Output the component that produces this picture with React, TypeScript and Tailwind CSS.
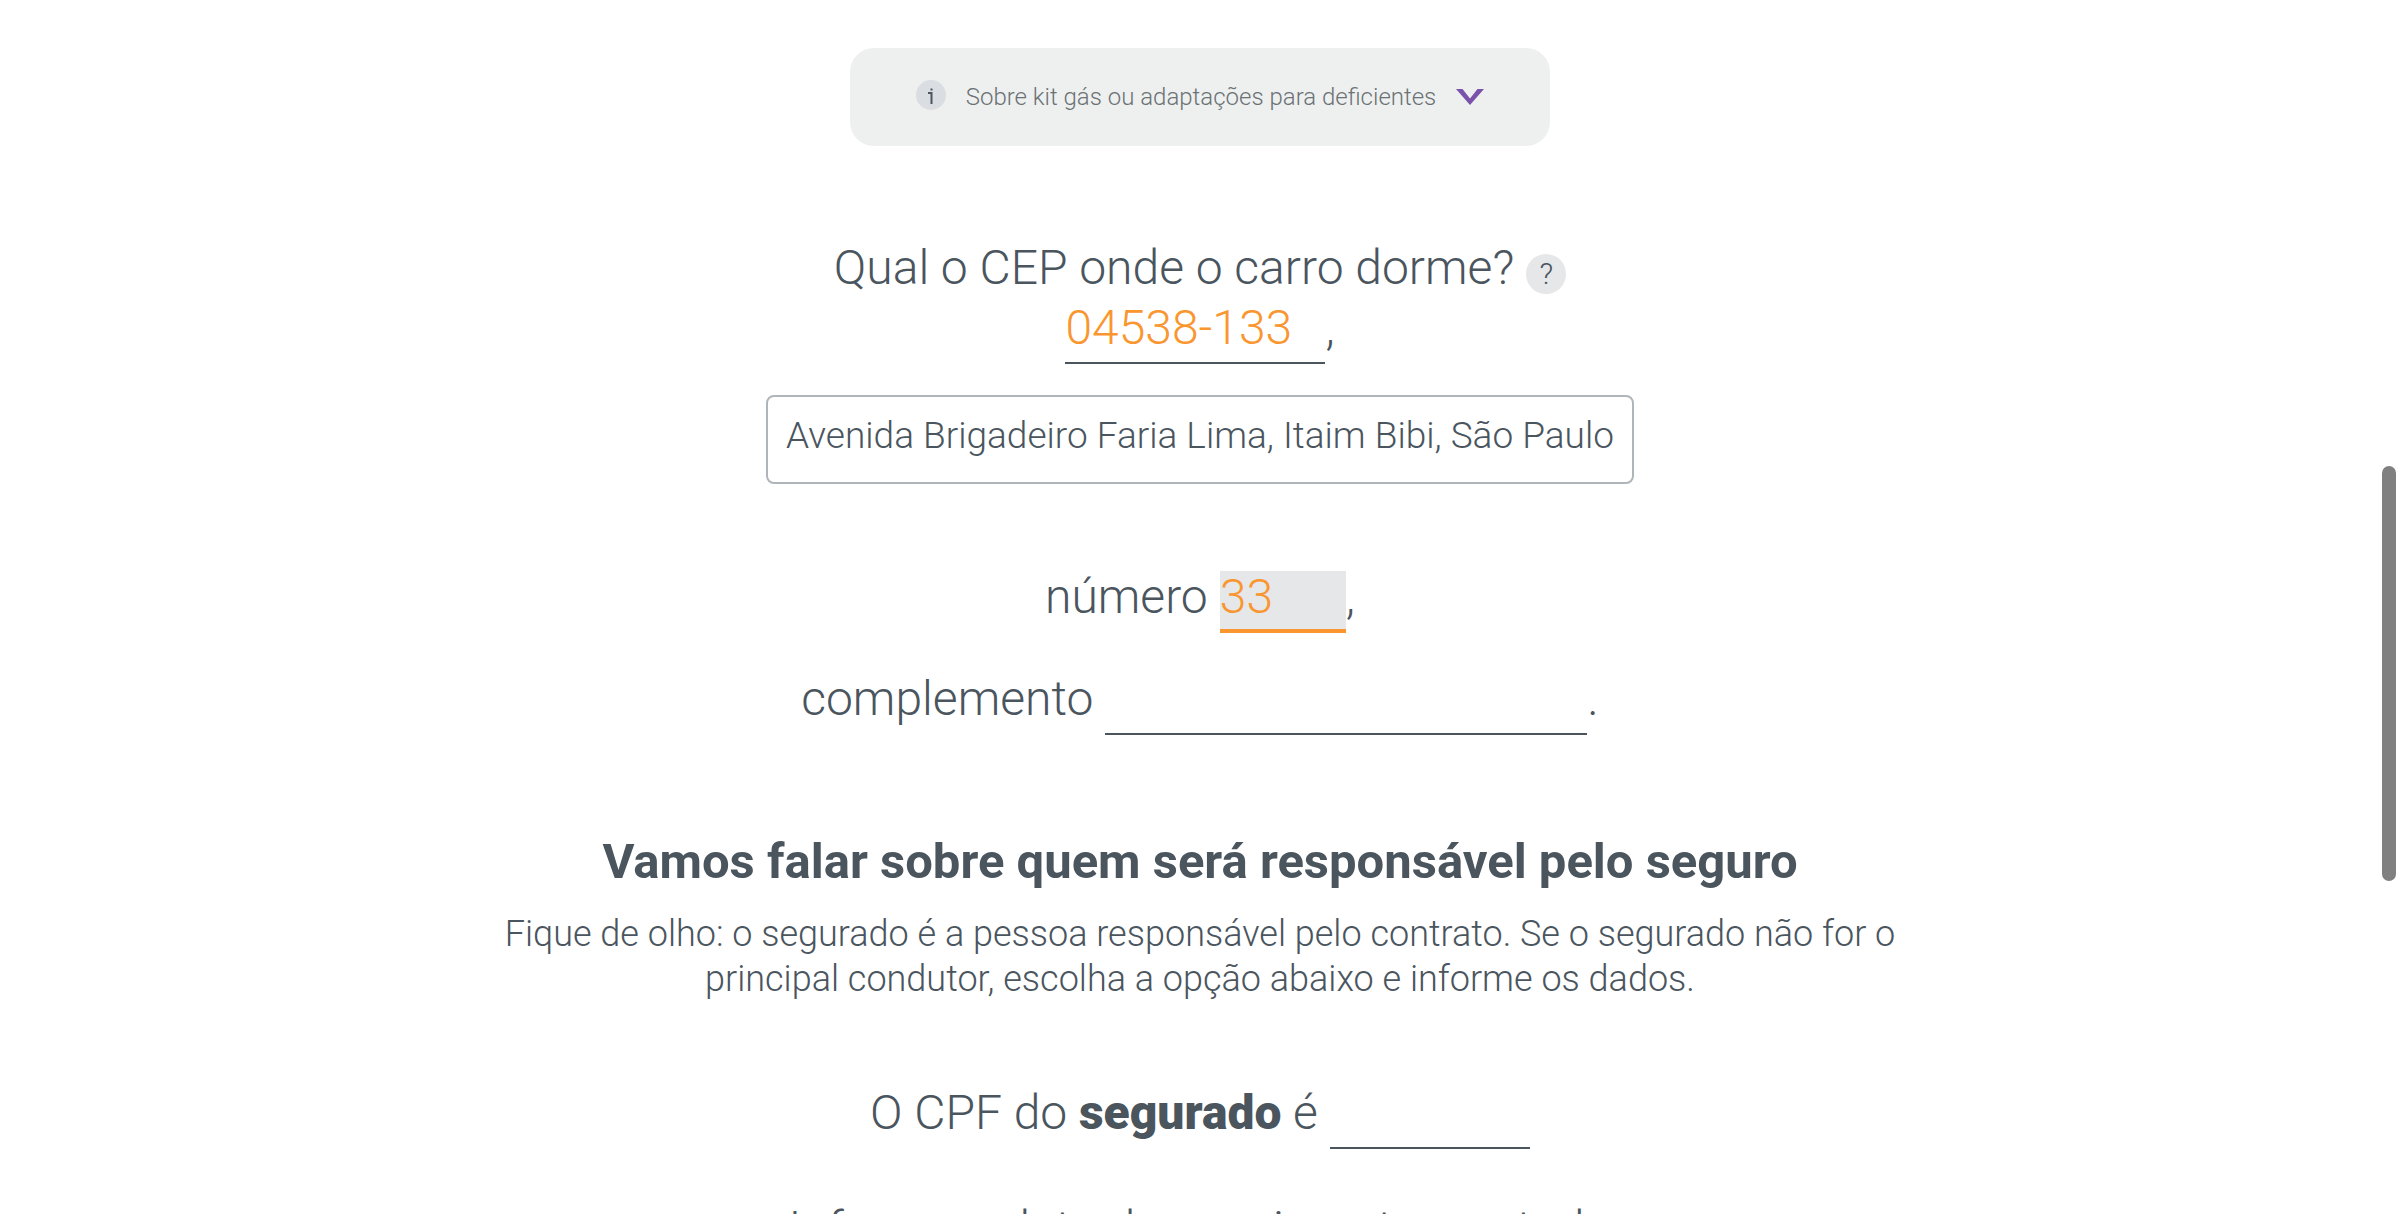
import type { InputHTMLAttributes, ReactNode } from "react";

function Row({ children, className = "" }: { children: ReactNode; className?: string }) {
  return <div className={`flex items-baseline justify-center gap-3 ${className}`}>{children}</div>;
}

function Field({ className = "", ...props }: InputHTMLAttributes<HTMLInputElement>) {
  return (
    <input
      type="text"
      className={`h-[62px] rounded-none border-b-2 border-[#4a555e] bg-transparent p-0 pb-[10px] font-light text-[#f99630] outline-none ${className}`}
      {...props}
    />
  );
}

export default function App() {
  return (
    <main className="relative h-screen overflow-hidden bg-white font-['Roboto',sans-serif] text-[48px] leading-[50px] font-light text-[#4a555e]">
      <form className="mx-auto flex max-w-[1420px] flex-col items-center pt-12">
        <button
          type="button"
          aria-expanded="false"
          className="flex h-[98px] w-[700px] items-center justify-center gap-5 rounded-3xl bg-[#eef0ef] text-[24px] leading-8 font-light text-[#6b7275]"
        >
          <span className="mb-1 size-[30px] rounded-full bg-[#dadde1]">
            <svg viewBox="0 0 30 30" className="size-[30px]" fill="none" stroke="#4a555e" strokeWidth="2" aria-hidden="true">
              <path d="M12 13h3.500v11M14.500 9.500h2" />
            </svg>
          </span>
          <span>Sobre kit gás ou adaptações para deficientes</span>
          <svg viewBox="0 0 28 16" className="h-4 w-7" fill="#7b52ab" aria-hidden="true">
            <path d="M0 0h6.500l7.500 9.500L21.500 0H28L14 16z" />
          </svg>
        </button>

        <Row className="mt-[97px]">
          <label htmlFor="cep">Qual o CEP onde o carro dorme?</label>
          <button
            type="button"
            aria-label="Ajuda sobre o CEP"
            className="size-10 rounded-full bg-[#e5e7e9] text-center text-[30px] leading-10 font-light"
          >
            ?
          </button>
        </Row>
        <Row className="mt-2">
          <span className="flex items-baseline">
            <Field id="cep" defaultValue="04538-133" className="w-[260px]" />,
          </span>
        </Row>

        <output
          htmlFor="cep"
          className="mt-[31px] rounded-lg border-2 border-[#b0b5b9] px-[18px] pt-[17px] pb-6 text-[37px] leading-[44px]"
        >
          Avenida Brigadeiro Faria Lima, Itaim Bibi, São Paulo
        </output>

        <Row className="mt-[87px]">
          <label htmlFor="numero">número</label>
          <span className="flex items-baseline">
            <input
              id="numero"
              type="text"
              defaultValue="33"
              className="h-[62px] w-[126px] rounded-none border-b-4 border-[#f99630] bg-[#e5e7e9] p-0 pb-2 font-light text-[#f99630] outline-none"
            />
            ,
          </span>
        </Row>
        <Row className="mt-10">
          <label htmlFor="complemento">complemento</label>
          <span className="flex items-baseline">
            <Field id="complemento" className="w-[482px]" />.
          </span>
        </Row>

        <h2 className="mt-[98px] text-center text-[49px] leading-[58px] font-bold">
          Vamos falar sobre quem será responsável pelo seguro
        </h2>
        <p className="mt-[21px] text-center text-[36px] leading-[45px]">
          Fique de olho: o segurado é a pessoa responsável pelo contrato. Se o segurado não for o principal condutor,
          escolha a opção abaixo e informe os dados.
        </p>

        <Row className="mt-[85px]">
          <label htmlFor="cpf">
            O CPF do <strong className="font-black">segurado</strong> é
          </label>
          <Field id="cpf" className="w-[200px]" />
        </Row>

        <p className="mt-[55px] text-center">Informe a data de nascimento e estado</p>
      </form>

      <div className="absolute top-[466px] right-1 h-[415px] w-[14px] rounded-full bg-[#808080]" />
    </main>
  );
}
